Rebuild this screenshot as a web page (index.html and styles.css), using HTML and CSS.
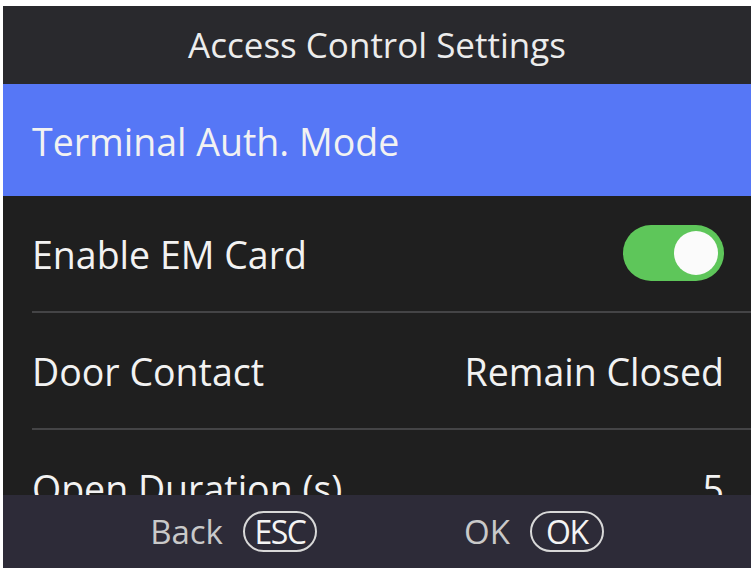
FILE: index.html
```html
<!DOCTYPE html>
<html lang="en">
<head>
<meta charset="utf-8">
<title>Access Control Settings</title>
<link rel="stylesheet" href="styles.css">
</head>
<body>
<div class="screen">
  <header class="title-bar">Access Control Settings</header>
  <div class="list">
    <div class="row selected"><span class="label">Terminal Auth. Mode</span></div>
    <div class="row">
      <span class="label">Enable EM Card</span>
      <span class="toggle on"><span class="knob"></span></span>
    </div>
    <div class="sep"></div>
    <div class="row">
      <span class="label">Door Contact</span>
      <span class="value">Remain Closed</span>
    </div>
    <div class="sep"></div>
    <div class="row">
      <span class="label">Open Duration (s)</span>
      <span class="value">5</span>
    </div>
  </div>
  <footer class="footer">
    <div class="action"><span class="act-label">Back</span><span class="key">ESC</span></div>
    <div class="action"><span class="act-label">OK</span><span class="key">OK</span></div>
  </footer>
</div>
</body>
</html>
```
FILE: styles.css
```css
html, body {
  margin: 0;
  padding: 0;
  background: #ffffff;
}
body {
  padding: 6px 0 0 3px;
  width: 751px;
  height: 568px;
  box-sizing: border-box;
  overflow: hidden;
  font-family: "Open Sans", "Noto Sans", sans-serif;
}
.screen {
  width: 748px;
  height: 562px;
  display: flex;
  flex-direction: column;
  background: #1f1f1f;
  color: #f2f2f2;
}
.title-bar {
  height: 78px;
  flex: none;
  background: #29292d;
  display: flex;
  align-items: center;
  justify-content: center;
  font-size: 35px;
  color: #ececec;
  padding-bottom: 2px;
  box-sizing: border-box;
}
.list {
  flex: 1;
  overflow: hidden;
  background: #1f1f1f;
}
.row {
  height: 115px;
  display: flex;
  align-items: center;
  justify-content: space-between;
  padding: 2px 27px 0 29px;
  box-sizing: border-box;
  font-size: 37.5px;
  white-space: nowrap;
}
.row.selected {
  height: 112px;
  background: #5677f6;
}
.sep {
  height: 2px;
  margin-left: 29px;
  background: #444446;
}
.toggle {
  width: 101px;
  height: 56px;
  border-radius: 28px;
  background: #5ec65a;
  display: flex;
  align-items: center;
  justify-content: flex-end;
  padding-right: 6px;
  box-sizing: border-box;
  margin-top: -4px;
}
.knob {
  width: 44px;
  height: 44px;
  border-radius: 50%;
  background: #fbfbfb;
}
.footer {
  height: 73px;
  flex: none;
  background: #2d2b38;
  display: flex;
  justify-content: center;
  align-items: center;
  gap: 147px;
  color: #c9c9c9;
  font-size: 33px;
  box-sizing: border-box;
}
.action {
  display: flex;
  align-items: center;
  gap: 20px;
}
.key {
  border: 2px solid #d8d8d8;
  border-radius: 22px;
  height: 37px;
  min-width: 54px;
  padding: 0 8px;
  display: flex;
  align-items: center;
  justify-content: center;
  color: #f4f4f4;
  font-size: 32px;
  font-weight: 500;
  letter-spacing: -1.5px;
}
```
